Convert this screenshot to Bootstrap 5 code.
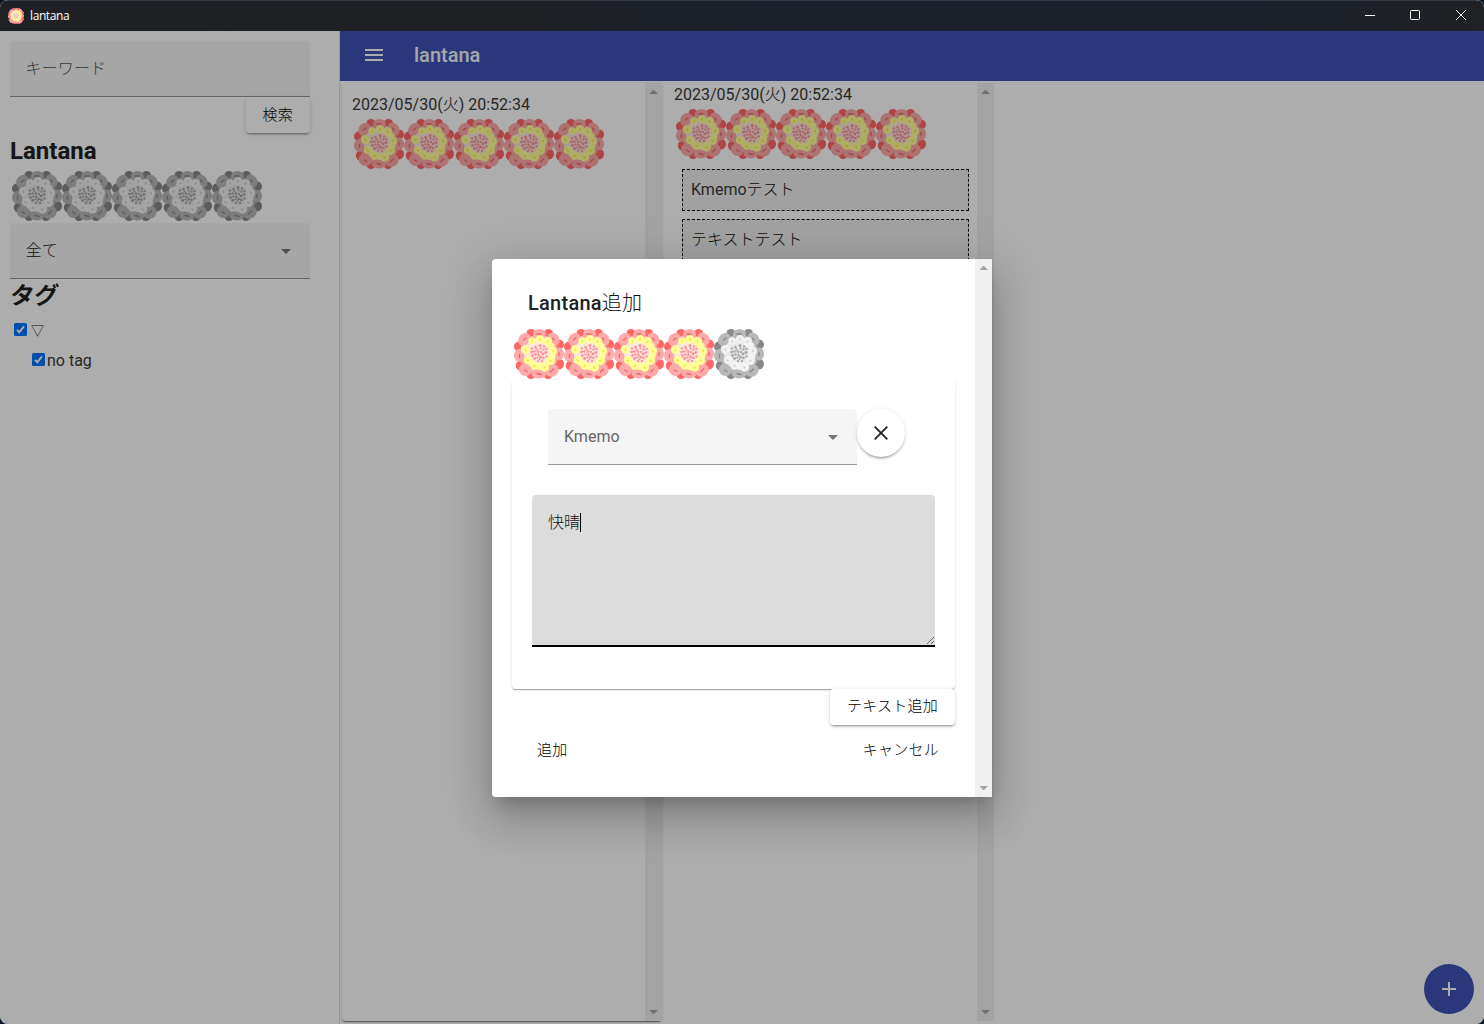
<!DOCTYPE html>
<html lang="ja">
<head>
<meta charset="utf-8">
<meta name="viewport" content="width=device-width, initial-scale=1">
<title>lantana</title>
<link href="https://cdn.jsdelivr.net/npm/bootstrap@5.3.0/dist/css/bootstrap.min.css" rel="stylesheet">
<style>
html,body{height:100%}
body{font-family:Roboto,"Noto Sans CJK JP",sans-serif;font-size:16px;line-height:24px;color:#3a3a3a;overflow:hidden;background:#0b1626}
.app-window{height:1024px;border-radius:8px;overflow:hidden;background:#fff}
.title-bar{height:31px;background:linear-gradient(90deg,#202124,#1f2023 32%,#1b202a 50%,#1b202a 85%,#202124);border-top:1px solid #303b45;color:#fff;padding-left:8px}
.title-text{font:12px/18px "Open Sans","Noto Sans",sans-serif;margin-left:6px;letter-spacing:-.4px}
.win-btn{width:46px;height:30px}
.side{width:340px;padding:10px 29px 0 10px;border-right:1px solid #e0e0e0}
.field{height:56px;background:#f5f5f5;border-bottom:1px solid #9a9a9a;border-radius:4px 4px 0 0;padding:0 19px 0 16px}
.side .field.jp-light{padding-left:15.500px;letter-spacing:.15px}
.jp-light{font-family:Roboto,"Noto Sans CJK JP",sans-serif;font-weight:300;color:#111}
.hint{color:#555}
.raised{height:36px;background:#fff;border-radius:4px;font-size:15px;letter-spacing:.25px;box-shadow:0 3px 1px -2px rgba(0,0,0,.2),0 2px 2px rgba(0,0,0,.14),0 1px 5px rgba(0,0,0,.12);border:0;padding:0 16.900px;color:#000;line-height:34px}
.raised.add-text{line-height:32px;padding:1px 17px 3px}
.side-title{font-size:24px;font-weight:700;margin:0;color:#212121}
.side-title.kana{transform:skewX(-7deg);line-height:34px;height:36px}
.flowers{height:54px;padding:2px}
.flower{width:50px;height:50px;flex:none;--d:#f66;--l:#faa;--m:#e66;--y:#ff9;--k:#fd3;--c:#fde4e4;--s:#f99}
.off .flower,.flower.off{--d:#888;--l:#b8b8b8;--m:#888;--y:#f2f2f2;--k:#ccc;--c:#e9e9e9;--s:#aaa}
.app-icon{width:16px;height:16px}
.caret{width:0;height:0;border:5px solid transparent;border-top-color:#757575;border-bottom:0;margin-top:1px}
.tick{width:13px;height:13px;flex:none;margin-top:-1px}
.tag-row{height:30px}
.tag-row.child{padding-left:22px}
.top-bar{height:50px;background:#3f51b5;color:#fff;padding:0 0 2px 25px}
.top-title{font-size:20px;font-weight:500;margin-left:31px;color:#f6f6fa}
.panes{padding:2px 0 0 2px}
.pane{height:938px;background:#fff}
.pane-one{width:320px;border-radius:4px;box-shadow:0 2px 1px -1px rgba(0,0,0,.3),0 1px 1px rgba(0,0,0,.2),0 1px 3px rgba(0,0,0,.15)}
.pane-one .entry{padding:10px 10px 0}
.pane-one .flowers{padding-top:2px}
.pane-two{width:330px;margin-left:2px}
.pane-two .stamp{padding-left:10px}
.pane-two .flowers{padding:2px 0 0 12px;height:62px}
.scroll{width:17px;background:#f0f0f0;padding:7px 0}
.scroll svg{width:17px;height:4px;fill:#a3a3a3}
.memo{height:42px;border:1px dashed #000;background:#eee;margin:0 8px 8px 18px;padding:8px;line-height:23px}
.fab{right:10px;bottom:10px;width:50px;height:50px;border-radius:50%;background:#3f51b5}
.scrim{left:0;top:31px;right:0;bottom:0;background:rgba(0,0,0,.32);border-radius:0 0 8px 8px}
.dialog{left:492px;top:259px;width:500px;height:538px;background:#fff;border-radius:4px 0 0 4px;overflow:hidden}
.dialog-shadow{left:492px;top:259px;width:500px;height:538px;border-radius:4px;box-shadow:0 11px 15px -7px rgba(0,0,0,.2),0 24px 38px 3px rgba(0,0,0,.14),0 9px 46px 8px rgba(0,0,0,.12)}
.dialog-body{padding:20px}
.dialog-body .flowers{height:53px}
.dialog-title{height:48px;font-size:20px;font-weight:500;letter-spacing:.25px;padding-left:16px;color:#212121}
.text-box{height:309px;border-radius:4px;padding:29px 20px 0;box-shadow:0 2px 1px -1px rgba(0,0,0,.2),0 1px 1px rgba(0,0,0,.14),0 1px 3px rgba(0,0,0,.12)}
.kind{width:309px;color:#666}
.round{width:48px;height:48px;border-radius:50%;box-shadow:0 3px 1px -2px rgba(0,0,0,.2),0 2px 2px rgba(0,0,0,.14),0 1px 5px rgba(0,0,0,.12)}
.area{height:152px;background:#dcdcdc;border-bottom:2px solid #000;border-radius:4px 4px 0 0;margin-top:30px;padding:16px 16px}
.cursor{width:1px;height:19px;background:#000;margin-top:2px}
.flat{font-size:15px;letter-spacing:.25px;color:#000;padding:13px 16px 0 25px}
</style>
</head>
<body>
<svg width="0" height="0" class="position-absolute" aria-hidden="true">
<symbol id="lantana" viewBox="0 0 50 50">
<g style="fill:var(--d)"><circle cx="17" cy="4.500" r="4.500"/><circle cx="34.500" cy="4.500" r="4.500"/><circle cx="45" cy="15.500" r="5"/><circle cx="44.500" cy="35" r="5.500"/><circle cx="5" cy="17.500" r="5"/><circle cx="7" cy="36.500" r="5.200"/><circle cx="17" cy="45.500" r="4.500"/><circle cx="34" cy="45.500" r="4.500"/></g>
<g style="fill:var(--l)"><circle cx="25" cy="25" r="19.500"/><ellipse cx="25.500" cy="5.500" rx="6.500" ry="5.500"/><ellipse cx="10.500" cy="10.500" rx="6" ry="7" transform="rotate(40 10.500 10.500)"/><ellipse cx="39.500" cy="10" rx="5.500" ry="7" transform="rotate(-35 39.500 10)"/><ellipse cx="45" cy="25" rx="5" ry="6.500"/><ellipse cx="5.500" cy="26.500" rx="5.500" ry="6.500"/><ellipse cx="11.500" cy="40.500" rx="6.700" ry="6.500"/><ellipse cx="25" cy="44.500" rx="7.500" ry="5"/><ellipse cx="38" cy="41.500" rx="7" ry="6" transform="rotate(-35 38 41.500)"/></g>
<g style="stroke:var(--m);stroke-width:1.300;stroke-linecap:round"><path d="M23 5h4M9.500 11l2.500-2M38.500 9l1.500 2M45 23.500v3M5.500 25.500v3M10.500 41l2.500 1.500M23 44.500l4 1M36.500 43l3-3"/></g>
<circle cx="25" cy="24" r="15" style="fill:var(--c)"/>
<g style="fill:var(--y)"><circle cx="18" cy="12" r="3.700"/><circle cx="26" cy="10.300" r="4.200"/><circle cx="33.500" cy="12.500" r="4.500"/><circle cx="37" cy="17" r="3.500"/><circle cx="39" cy="22" r="4"/><circle cx="38" cy="27" r="3.500"/><circle cx="36.500" cy="31.500" r="4.500"/><circle cx="30.500" cy="38" r="4.700"/><circle cx="25.500" cy="37.500" r="3.500"/><circle cx="20.500" cy="36.500" r="4.200"/><circle cx="14" cy="31" r="4.300"/><circle cx="17.500" cy="34.500" r="3.200"/><circle cx="11.500" cy="20.500" r="4.500"/></g>
<g style="stroke:var(--k);stroke-width:1.500;stroke-linecap:round"><path d="M18 12l.5.700M26 9.800v1.200M34 12l-.8 1.200M39 21.300v1.400M36 31.500l1 .4M30 38l1 .8M21 36.500l-.7 1M13 31l1.200.8M11.500 20v1.500"/></g>
<g style="fill:var(--s)"><circle cx="18" cy="19.500" r="1.200"/><circle cx="21.500" cy="18" r="1.300"/><circle cx="22.500" cy="20.500" r="1.100"/><circle cx="26" cy="16.500" r="1.400"/><circle cx="26.500" cy="19.500" r="1.100"/><circle cx="30" cy="17.500" r="1.300"/><circle cx="29.500" cy="20.500" r="1.200"/><circle cx="32.500" cy="20" r="1.200"/><circle cx="17.500" cy="23" r="1.300"/><circle cx="20.500" cy="22.500" r="1.200"/><circle cx="24" cy="22.500" r="1.300"/><circle cx="27" cy="23" r="1.200"/><circle cx="32" cy="23.500" r="1.400"/><circle cx="18.500" cy="26.500" r="1.400"/><circle cx="21.500" cy="25.500" r="1.300"/><circle cx="24.500" cy="26" r="1.200"/><circle cx="29" cy="25" r="1.400"/><circle cx="32.500" cy="27.500" r="1.200"/><circle cx="20.500" cy="29.500" r="1.400"/><circle cx="23.500" cy="28.500" r="1.100"/><circle cx="26.500" cy="28" r="1.400"/><circle cx="29.500" cy="29" r="1.300"/><circle cx="24" cy="32" r="1.200"/><circle cx="28" cy="32" r="1.200"/><circle cx="25.500" cy="30.200" r=".9"/></g>
<path d="M21.500 18l1 2.500M26 16.500l.5 3M17.500 23l3-.5M29 25l3-1.500M20.500 29.500l3-1M26.500 28l3 1M24 22.500l.5 3.500" style="stroke:var(--m);stroke-width:.7;opacity:.6;fill:none"/>
</symbol>
<symbol id="arrow-up" viewBox="0 0 17 4"><path d="M8 0h1l4 4H4.500z"/></symbol>
<symbol id="arrow-down" viewBox="0 0 17 4"><path d="M4.500 0H13L9 4H8z"/></symbol>
</svg>

<div class="app-window position-relative d-flex flex-column">
  <header class="title-bar d-flex align-items-center flex-shrink-0">
    <svg class="flower app-icon"><use href="#lantana"/></svg>
    <span class="title-text">lantana</span>
    <div class="d-flex ms-auto">
      <svg class="win-btn" viewBox="0 0 46 30" fill="none" stroke="#fff"><path d="M19 14.500h10"/></svg>
      <svg class="win-btn" viewBox="0 0 46 30" fill="none" stroke="#fff"><rect x="18.500" y="9.500" width="9" height="9" rx="1"/></svg>
      <svg class="win-btn" viewBox="0 0 46 30" fill="none" stroke="#fff"><path d="M18 9l10 10M28 9L18 19"/></svg>
    </div>
  </header>
  <div class="d-flex flex-grow-1">
    <aside class="side flex-shrink-0">
      <div class="field d-flex align-items-center jp-light hint"><span>キーワード</span></div>
      <div class="d-flex justify-content-end"><button class="raised jp-light">検索</button></div>
      <h2 class="side-title" style="line-height:36px">Lantana</h2>
      <div class="flowers off d-flex">
        <svg class="flower"><use href="#lantana"/></svg><svg class="flower"><use href="#lantana"/></svg><svg class="flower"><use href="#lantana"/></svg><svg class="flower"><use href="#lantana"/></svg><svg class="flower"><use href="#lantana"/></svg>
      </div>
      <div class="field d-flex align-items-center justify-content-between jp-light"><span>全て</span><span class="caret"></span></div>
      <h2 class="side-title kana">タグ</h2>
      <div class="tag-row d-flex align-items-center ps-1">
        <svg class="tick" viewBox="0 0 13 13"><rect width="13" height="13" rx="1.500" fill="#0075ff"/><path d="M3 6.800l2.300 2.400L10 3.400" fill="none" stroke="#fff" stroke-width="1.900"/></svg>
        <span class="jp-light" style="margin:2px 0 0 4px;font-size:13px">▽</span>
      </div>
      <div class="tag-row child d-flex align-items-center">
        <svg class="tick" viewBox="0 0 13 13"><rect width="13" height="13" rx="1.500" fill="#0075ff"/><path d="M3 6.800l2.300 2.400L10 3.400" fill="none" stroke="#fff" stroke-width="1.900"/></svg>
        <span style="margin:1px 0 0 2px">no tag</span>
      </div>
    </aside>
    <main class="flex-grow-1">
      <nav class="top-bar d-flex align-items-center">
        <svg width="18" height="12" fill="#fff"><path d="M0 0h18v2H0zM0 5h18v2H0zM0 10h18v2H0z"/></svg>
        <span class="top-title">lantana</span>
      </nav>
      <div class="panes d-flex">
        <section class="pane pane-one d-flex">
          <div class="entry flex-grow-1">
            <div>2023/05/30(<span class="jp-light">火</span>) 20:52:34</div>
            <div class="flowers d-flex">
              <svg class="flower"><use href="#lantana"/></svg><svg class="flower"><use href="#lantana"/></svg><svg class="flower"><use href="#lantana"/></svg><svg class="flower"><use href="#lantana"/></svg><svg class="flower"><use href="#lantana"/></svg>
            </div>
          </div>
          <div class="scroll d-flex flex-column justify-content-between"><svg><use href="#arrow-up"/></svg><svg><use href="#arrow-down"/></svg></div>
        </section>
        <section class="pane pane-two d-flex">
          <div class="flex-grow-1">
            <div class="stamp">2023/05/30(<span class="jp-light">火</span>) 20:52:34</div>
            <div class="flowers d-flex">
              <svg class="flower"><use href="#lantana"/></svg><svg class="flower"><use href="#lantana"/></svg><svg class="flower"><use href="#lantana"/></svg><svg class="flower"><use href="#lantana"/></svg><svg class="flower"><use href="#lantana"/></svg>
            </div>
            <div class="memo">Kmemo<span class="jp-light">テスト</span></div>
            <div class="memo jp-light">テキストテスト</div>
          </div>
          <div class="scroll d-flex flex-column justify-content-between"><svg><use href="#arrow-up"/></svg><svg><use href="#arrow-down"/></svg></div>
        </section>
      </div>
    </main>
  </div>
  <div class="fab position-absolute d-flex align-items-center justify-content-center">
    <svg width="14" height="14" fill="#fff"><path d="M6 0h2v6h6v2H8v6H6V8H0V6h6z"/></svg>
  </div>
  <div class="scrim position-absolute"></div>
  <div class="dialog-shadow position-absolute"></div>
  <div class="dialog position-absolute d-flex" role="dialog">
    <div class="dialog-body flex-grow-1">
      <div class="dialog-title d-flex align-items-center"><span>Lantana<span class="jp-light">追加</span></span></div>
      <div class="flowers d-flex">
        <svg class="flower"><use href="#lantana"/></svg><svg class="flower"><use href="#lantana"/></svg><svg class="flower"><use href="#lantana"/></svg><svg class="flower"><use href="#lantana"/></svg><svg class="flower off"><use href="#lantana"/></svg>
      </div>
      <div class="text-box">
        <div class="d-flex ps-3">
          <div class="field kind d-flex align-items-center justify-content-between"><span>Kmemo</span><span class="caret"></span></div>
          <div class="round d-flex align-items-center justify-content-center"><svg width="14" height="14" stroke="#222" stroke-width="1.800"><path d="M.7.7l12.600 12.600M13.300.7L.7 13.300"/></svg></div>
        </div>
        <div class="area d-flex position-relative jp-light"><span>快晴</span><span class="cursor"></span>
          <svg class="position-absolute bottom-0 end-0" width="9" height="9" stroke="#555" stroke-width=".9"><path d="M1 8l7-7M5 8l3-3"/></svg>
        </div>
      </div>
      <div class="d-flex justify-content-end"><button class="raised add-text position-relative jp-light">テキスト追加</button></div>
      <div class="d-flex justify-content-between flat jp-light"><span>追加</span><span>キャンセル</span></div>
    </div>
    <div class="scroll d-flex flex-column justify-content-between"><svg><use href="#arrow-up"/></svg><svg><use href="#arrow-down"/></svg></div>
  </div>
</div>
<script src="https://cdn.jsdelivr.net/npm/bootstrap@5.3.0/dist/js/bootstrap.bundle.min.js"></script>
</body>
</html>
